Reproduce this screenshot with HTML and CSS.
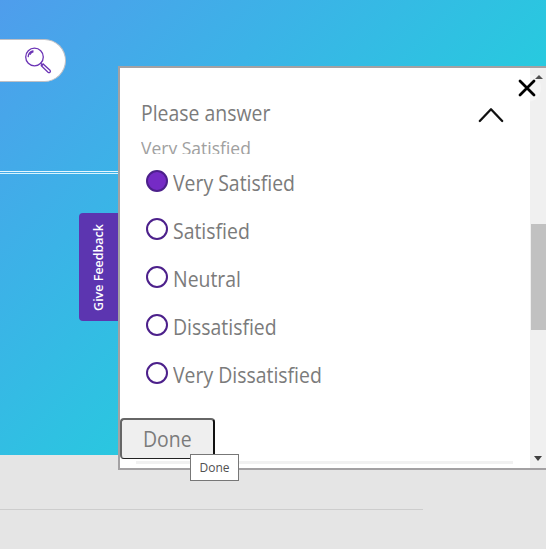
FILE: index.html
```
<!DOCTYPE html>
<html lang="en">
<head>
<meta charset="utf-8">
<title>Feedback</title>
<link rel="stylesheet" href="styles.css">
</head>
<body>
<div class="page">
  <header class="hero">
    <div class="search">
      <svg class="search-icon" width="28" height="28" viewBox="0 0 28 28" fill="none" stroke="#6b33b5" stroke-width="1.3" stroke-linecap="round">
        <circle cx="10.5" cy="10" r="8.8"/>
        <path d="M4.2 9.6C4.4 6.6 6 4.5 9 3.8M6.2 7.3C6.8 6 7.5 5.5 9 5"/>
        <path d="M16.7 16.3L18.4 18"/>
        <path d="M17.3 18.8L19.1 17L26 23.2C27.2 24.7 25.5 26.3 24 25.2Z"/>
      </svg>
    </div>
    <div class="rule"></div>
  </header>
  <footer class="base"><div class="base-line"></div></footer>
</div>
<div class="feedback-tab"><span>Give Feedback</span></div>
<section class="panel">
  <div class="content">
    <div class="question">
      <h1>Please answer</h1>
      <svg class="chevron" width="26" height="16" viewBox="0 0 26 16" fill="none" stroke="#111" stroke-width="2.3" stroke-linecap="round" stroke-linejoin="round"><path d="M1.8 14L13 2.3L24.2 14"/></svg>
    </div>
    <div class="chosen">Very Satisfied</div>
    <ul class="options">
      <li><i class="radio on"></i><span>Very Satisfied</span></li>
      <li><i class="radio"></i><span>Satisfied</span></li>
      <li><i class="radio"></i><span>Neutral</span></li>
      <li><i class="radio"></i><span>Dissatisfied</span></li>
      <li><i class="radio"></i><span>Very Dissatisfied</span></li>
    </ul>
    <button class="done"><span>Done</span></button>
    <div class="divider"></div>
  </div>
  <div class="scrollbar">
    <svg class="up" width="8" height="4" viewBox="0 0 8 4"><path d="M0 4L4 0L8 4Z" fill="#505050"/></svg>
    <div class="thumb"></div>
    <svg class="down" width="8" height="5" viewBox="0 0 8 5"><path d="M0 0H8L4 5Z" fill="#404040"/></svg>
  </div>
  <div class="close"><svg width="18" height="18" viewBox="0 0 18 18" stroke="#000" stroke-width="2.8" stroke-linecap="round"><path d="M2 2L16 16M16 2L2 16"/></svg></div>
</section>
<div class="tooltip">Done</div>
</body>
</html>
```
FILE: styles.css
```
* { box-sizing: border-box; }
body { margin: 0; overflow: hidden; font-family: "Open Sans", "Noto Sans", sans-serif; color: #7b7b7b; }
.page { width: 546px; height: 549px; background: #e5e5e5; }
.hero { height: 455px; padding-top: 39px; background: linear-gradient(135deg, #4f9dec 0%, #47a6ea 12%, #3bb3e7 30%, #28c9df 60%); }
.search { width: 66px; height: 43px; background: #fff; border: 1px solid #c0c0c5; border-left: 0; border-radius: 0 22px 22px 0; padding: 7px 0 0 24px; }
.search-icon { display: block; }
.rule { height: 3px; margin-top: 89px; border-top: 1px solid #e5f6ff; border-bottom: 1px solid #d9f3fd; }
.base { padding-top: 54px; }
.base-line { width: 423px; height: 1px; background: #cdcdcd; }
.feedback-tab { position: absolute; left: 79px; top: 213px; width: 40px; height: 108px; background: #5c35b0; border-radius: 4px 0 0 4px; display: flex; align-items: center; justify-content: center; }
.feedback-tab span { writing-mode: vertical-rl; transform: rotate(180deg); color: #fff; font: 600 12.5px/18px "Open Sans", sans-serif; white-space: nowrap; }
.panel { position: absolute; left: 118px; top: 66px; width: 428px; height: 404px; border: 2px solid #a3a1a3; border-right: 0; background: #fff; display: flex; overflow: hidden; }
.content { width: 410px; height: 400px; flex: none; }
.question { display: flex; justify-content: space-between; height: 71px; padding: 30px 26px 0 21px; }
h1, .options span { transform: scaleX(.925); transform-origin: left; }
h1 { margin: 0; font-size: 21px; font-weight: 400; line-height: 30px; white-space: nowrap; }
.chevron { margin-top: 9px; }
.chosen { height: 15px; margin-left: 21px; overflow: hidden; color: #a0a0a0; font-size: 17.5px; line-height: 19px; white-space: nowrap; }
.options { list-style: none; margin: 16px 0 0; padding: 0 0 0 26px; }
.options li { display: flex; height: 48px; align-items: flex-start; font-size: 21px; line-height: 26px; white-space: nowrap; }
.radio { width: 22px; height: 22px; border: 2px solid #4c208b; border-radius: 50%; margin-right: 5px; flex: none; }
.radio.on { background: #752bc5; }
.done { display: block; width: 95px; height: 41px; margin-top: 8px; padding: 0; border: 2px solid #666; border-right-color: #111; border-bottom: 1px solid #222; border-radius: 4px; background: #efefef; color: #7b7b7b; font: 21px/36px "Open Sans", sans-serif; }
.done span { display: inline-block; transform: scaleX(.925); }
.divider { height: 3px; margin: 2px 17px 0 16px; background: #f1f1f1; }
.scrollbar { width: 16px; height: 400px; background: #f0f0f0; display: flex; flex-direction: column; }
.up { margin: 7px 0 0 5px; position: relative; z-index: 1; }
.thumb { height: 106px; margin: 145px 0 0 1px; background: #c1c1c1; }
.down { margin: 126px 0 0 4px; }
.close { position: absolute; left: 393px; top: 6px; width: 28px; height: 28px; border-radius: 50%; background: rgba(255,255,255,.35); display: flex; align-items: center; justify-content: center; }
.tooltip { position: absolute; left: 190px; top: 454px; width: 49px; height: 27px; border: 1px solid #777; background: #fff; color: #505050; font: 12px/25px "Open Sans", sans-serif; text-align: center; }
```
